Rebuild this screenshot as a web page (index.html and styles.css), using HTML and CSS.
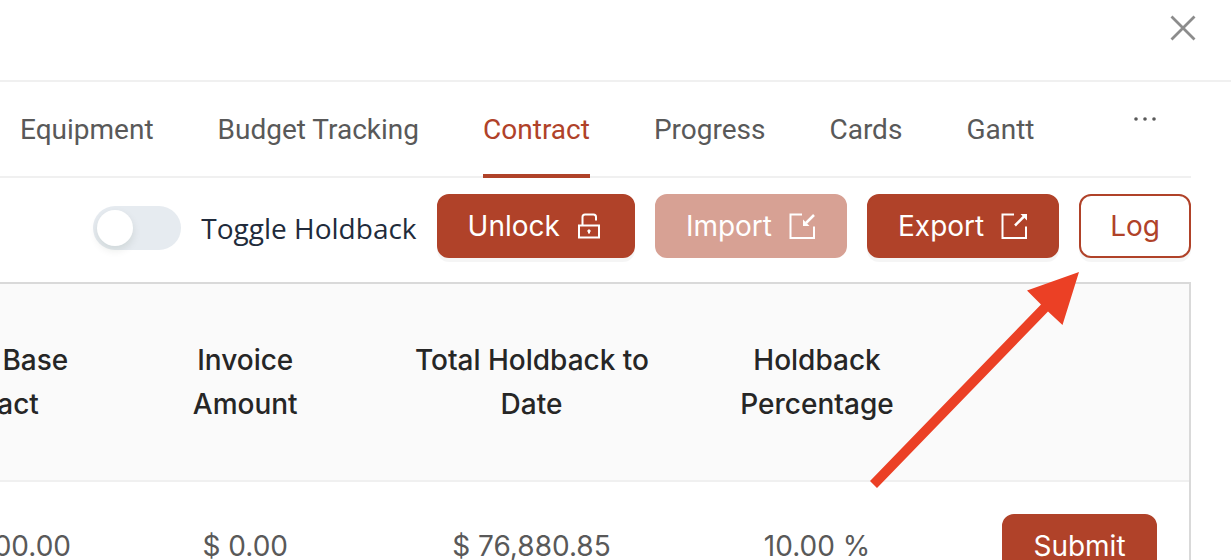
FILE: index.html
```html
<!DOCTYPE html>
<html lang="en">
<head>
<meta charset="utf-8">
<title>Contract</title>
<link rel="stylesheet" href="styles.css">
</head>
<body>
<main class="modal">
  <header class="modal-header">
    <button class="icon-button close" type="button" aria-label="Close">
      <svg width="26" height="26" viewBox="0 0 26 26" fill="none" stroke="currentColor" stroke-width="2.8"><path d="M1.5 1.5l23 23M24.5 1.5l-23 23"/></svg>
    </button>
  </header>
  <div class="content">
    <nav class="tabs">
      <a class="tab" href="#equipment">Equipment</a>
      <a class="tab" href="#budget">Budget Tracking</a>
      <a class="tab active" href="#contract" aria-current="page">Contract</a>
      <a class="tab" href="#progress">Progress</a>
      <a class="tab" href="#cards">Cards</a>
      <a class="tab" href="#gantt">Gantt</a>
      <button class="icon-button more" type="button" aria-label="More tabs">
        <svg width="24" height="6" viewBox="0 0 24 6" fill="currentColor"><circle cx="3" cy="3" r="1.8"/><circle cx="12" cy="3" r="1.8"/><circle cx="21" cy="3" r="1.8"/></svg>
      </button>
    </nav>
    <div class="toolbar">
      <input class="switch" type="checkbox" id="holdback">
      <label class="switch-label" for="holdback">Toggle Holdback</label>
      <button class="button" type="button">Unlock
        <svg width="28" height="28" viewBox="0 0 28 28" fill="none" stroke="currentColor" stroke-width="2"><path d="M3 13.500h20v12H3zM6.500 13.500V5q0-2.500 2.500-2.500h8.500q2.500 0 2.500 2.500v3.500"/><path d="M13 17.500v4M11.500 19h3"/></svg>
      </button>
      <button class="button" type="button" disabled>Import
        <svg width="28" height="28" viewBox="0 0 28 28" fill="none" stroke="currentColor" stroke-width="2"><path d="M14 2.500H2.500v23.500h23.500V14.500"/><path d="M26 3L18 11" stroke-width="2.500"/><path d="M15 7.500v6.500h6.500z" fill="currentColor" stroke="none"/></svg>
      </button>
      <button class="button" type="button">Export
        <svg width="28" height="28" viewBox="0 0 28 28" fill="none" stroke="currentColor" stroke-width="2"><path d="M14 2.500H2.500v23.500h23.500V14.500"/><path d="M15 13.500L24 4.500" stroke-width="2.500"/><path d="M20.500 2h6.500v6.500z" fill="currentColor" stroke="none"/></svg>
      </button>
      <button class="button outline" type="button">Log</button>
    </div>
    <div class="table-frame">
      <table class="contract-table">
        <colgroup><col class="col-base"><col class="col-invoice"><col class="col-total"><col class="col-percent"><col class="col-action"></colgroup>
        <thead>
          <tr><th scope="col">Current Base<br>Contract</th><th scope="col">Invoice<br>Amount</th><th scope="col">Total Holdback to<br>Date</th><th scope="col">Holdback<br>Percentage</th><td></td></tr>
        </thead>
        <tbody>
          <tr><td>$ 000,000.00</td><td>$ 0.00</td><td>$ 76,880.85</td><td>10.00 %</td><td><button class="button" type="button">Submit</button></td></tr>
        </tbody>
      </table>
    </div>
    <svg class="arrow" width="210" height="218" viewBox="869 271 210 218" fill="#eb4025" aria-hidden="true"><path d="M1079 272L1027 290.500 1041 304.500 870 481 877 488 1048 311.500 1062.500 325z"/></svg>
  </div>
</main>
</body>
</html>
```
FILE: styles.css
```css
* { box-sizing: border-box; }

body {
  margin: 0;
  height: 100vh;
  overflow: hidden;
  background: #fff;
  color: #595959;
  font: 28px/44px Inter, sans-serif;
}

.modal-header {
  display: flex;
  justify-content: flex-end;
  height: 82px;
  padding: 15px 35px 0;
  border-bottom: 2px solid #f0f0f0;
}

.icon-button {
  display: block;
  padding: 0;
  border: 0;
  background: none;
  color: #595959;
}

.icon-button svg { display: block; }
.close { align-self: flex-start; color: #8c8c8c; }

.content {
  position: relative;
  padding-right: 40px;
}

.tabs {
  display: flex;
  gap: 64px;
  height: 96px;
  padding-left: 20px;
  border-bottom: 2px solid #f0f0f0;
  font-family: Roboto, sans-serif;
}

.tab {
  height: 96px;
  padding-top: 26px;
  color: #595959;
  text-decoration: none;
  white-space: nowrap;
}

.tab.active {
  border-bottom: 4px solid #b04229;
  color: #b04229;
}

.more {
  align-self: flex-start;
  margin: 34px 34px 0 auto;
}

.toolbar {
  display: flex;
  align-items: center;
  justify-content: flex-end;
  gap: 20px;
  padding: 16px 0 24px;
}

.switch {
  appearance: none;
  width: 88px;
  height: 44px;
  margin: 4px 0 0;
  padding: 4px;
  border-radius: 22px;
  background: #e6ebf0;
}

.switch::before {
  content: "";
  display: block;
  width: 36px;
  height: 36px;
  border-radius: 50%;
  background: #fff;
  box-shadow: 0 4px 8px rgba(0, 35, 11, 0.1);
}

.switch:checked { background: #b04229; }
.switch:checked::before { margin-left: auto; }

.switch-label {
  padding-top: 4px;
  color: #212b3b;
  font-family: "Open Sans", sans-serif;
  white-space: nowrap;
}

.button {
  display: inline-flex;
  align-items: center;
  gap: 16px;
  height: 64px;
  padding: 0 29px;
  border: 2px solid #b04229;
  border-radius: 12px;
  background: #b04229;
  box-shadow: 0 4px 0 rgba(0, 0, 0, 0.04);
  color: #fff;
  font: inherit;
  white-space: nowrap;
}

.button:disabled {
  border-color: #d7a194;
  background: #d7a194;
  box-shadow: none;
}

.button.outline {
  background: #fff;
  color: #b04229;
}

.table-frame {
  display: flex;
  justify-content: flex-end;
  overflow: hidden;
  border: 2px solid #d9d9d9;
  border-left: 0;
}

.contract-table {
  flex: none;
  width: calc(100% + 130px);
  border-collapse: separate;
  border-spacing: 0;
  table-layout: fixed;
  text-align: center;
  white-space: nowrap;
}

.col-base { width: 16.8%; }
.col-invoice { width: 23.3%; }
.col-total { width: 20.1%; }
.col-percent { width: 23.2%; }
.col-action { width: 16.6%; }

.contract-table th,
.contract-table td { padding: 32px 16px; }

.contract-table thead th,
.contract-table thead td {
  padding: 54px 16px;
  border-bottom: 2px solid #f0f0f0;
  background: #fafafa;
  color: #262626;
  font-weight: 500;
}

.contract-table .button { vertical-align: top; }

.arrow {
  position: absolute;
  top: 189px;
  right: 152px;
}
```
